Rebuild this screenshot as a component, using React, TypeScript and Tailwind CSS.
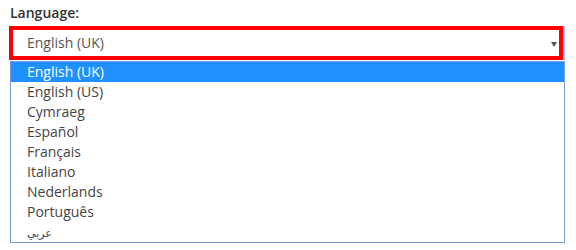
import React from 'react';

const languages = [
  'English (UK)',
  'English (US)',
  'Cymraeg',
  'Español',
  'Français',
  'Italiano',
  'Nederlands',
  'Português',
  'عربي',
];

export default function App() {
  const selected = 'English (UK)';

  return (
    <div className="w-[576px] h-[250px] bg-white font-['Open_Sans','DejaVu_Sans',sans-serif] overflow-hidden">
      <label className="block pt-[3px] pl-[10px] text-[14px] leading-[20px] font-semibold text-[#333333]">Language:</label>

      {/* select, highlighted with a red frame */}
      <div className="mt-[3px] ml-[9px] w-[554px] h-[34px] border-4 border-[#ff0000] flex items-center justify-between pl-[14px] pr-[2px] shadow-[2px_0_0_#9ec5f0]">
        <span className="text-[14px] leading-[20px] text-[#555555]">{selected}</span>
        <svg width="6" height="5" viewBox="0 0 6 5" className="mt-[2px]">
          <path d="M0 0 H6 L3 5 Z" fill="#555555" />
        </svg>
      </div>

      {/* open option list */}
      <ul className="mt-[1px] ml-[10px] w-[555px] border border-[#7b9bd6] bg-white">
        {languages.map(lang => (
          <li
            key={lang}
            className={
              lang === selected
                ? 'h-[20px] pl-[16px] text-[14px] leading-[20px] bg-[#1e90ff] text-white'
                : 'h-[20px] pl-[16px] text-[14px] leading-[20px] text-[#444444]'
            }
          >
            {lang === 'عربي' ? <span className="text-[11px]">{lang}</span> : lang}
          </li>
        ))}
      </ul>
    </div>
  );
}
